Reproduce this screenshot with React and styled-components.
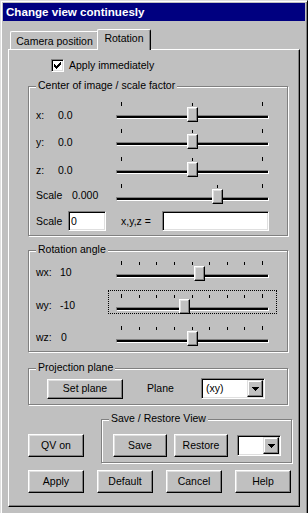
import React from "react";
import styled, { createGlobalStyle } from "styled-components";

const GlobalStyle = createGlobalStyle`
  html, body { margin: 0; padding: 0; background: #c0c0c0; overflow: hidden; }
  body {
    font-family: "Liberation Sans", Arial, sans-serif;
    font-size: 10.5px;
    color: #000;
  }
  * { box-sizing: border-box; }
`;

const Window = styled.div`
  width: 308px;
  height: 530px;
  background: #c0c0c0;
  border: 1px solid;
  border-color: #dfdfdf #000 #000 #dfdfdf;
  box-shadow: inset 1px 1px 0 #fff, inset -1px -1px 0 #808080;
  padding: 2px;
  display: flex;
  flex-direction: column;
`;

const TitleBar = styled.div`
  height: 18px;
  flex: none;
  background: #000080;
  color: #fff;
  font-weight: bold;
  font-size: 11.6px;
  line-height: 18px;
  padding-left: 3px;
  white-space: nowrap;
`;

const TabControl = styled.div`
  margin: 8px 5px 0;
  display: flex;
  flex-direction: column;
`;

const TabStrip = styled.div`
  height: 20px;
  display: flex;
  align-items: flex-end;
  padding-left: 2px;
`;

const Tab = styled.div`
  position: relative;
  z-index: ${(p) => (p.$active ? 1 : 0)};
  width: ${(p) => p.$w}px;
  height: ${(p) => (p.$active ? 21 : 18)}px;
  margin: ${(p) => (p.$active ? "0 -2px -1px -2px" : "0")};
  padding-top: ${(p) => (p.$active ? 2 : 3)}px;
  background: #c0c0c0;
  border-top: 1px solid #fff;
  border-left: 1px solid #fff;
  border-right: 1px solid #000;
  border-radius: 2px 2px 0 0;
  box-shadow: inset -1px 0 0 #808080;
  text-align: center;
  line-height: 13px;
  white-space: nowrap;
`;

const Panel = styled.div`
  height: 458px;
  border: 1px solid;
  border-color: #fff #000 #000 #fff;
  box-shadow: inset -1px -1px 0 #808080;
  padding-left: 19px;
  display: flex;
  flex-direction: column;
`;

const CheckRow = styled.div`
  display: flex;
  align-items: center;
  gap: 5px;
  height: 13px;
  margin: 9px 0 0 23px;
  line-height: 13px;
`;

const CheckBox = styled.span`
  width: 13px;
  height: 13px;
  background: #fff;
  border: 1px solid;
  border-color: #808080 #fff #fff #808080;
  box-shadow: inset 1px 1px 0 #000, inset -1px -1px 0 #dfdfdf;
  display: flex;
  align-items: center;
  justify-content: center;
  svg { display: block; }
`;

const Group = styled.div`
  position: relative;
  flex: none;
  width: ${(p) => p.$w}px;
  height: ${(p) => p.$h}px;
  margin-top: ${(p) => p.$mt}px;
  margin-left: ${(p) => p.$ml || 0}px;
  padding: ${(p) => p.$pad};
  border: 1px solid #808080;
  box-shadow: 1px 1px 0 #fff, inset 1px 1px 0 #fff;
  display: flex;
  flex-direction: ${(p) => p.$dir || "column"};
  align-items: flex-start;
  gap: ${(p) => p.$gap || 0}px;
`;

const Legend = styled.span`
  position: absolute;
  top: -8px;
  left: 7px;
  padding: 0 2px;
  background: #c0c0c0;
  line-height: 13px;
  white-space: nowrap;
`;

const Rows = styled.div`
  display: flex;
  flex-direction: column;
  gap: ${(p) => p.$gap}px;
`;

const SliderRowWrap = styled.div`
  display: flex;
  align-items: flex-end;
  height: 24px;
`;

const LabelArea = styled.div`
  width: 72px;
  display: flex;
  line-height: 13px;
  padding-bottom: ${(p) => p.$lift}px;
  white-space: nowrap;
`;

const Name = styled.span`
  width: ${(p) => p.$w}px;
  flex: none;
`;

const SliderBox = styled.div`
  position: relative;
  width: 169px;
  height: 24px;
  padding-top: 17px;
  outline: ${(p) => (p.$focused ? "1px dotted #000" : "none")};
  outline-offset: -1px;
`;

const TickMarks = styled.svg`
  position: absolute;
  left: 0;
  top: 0;
`;

const Channel = styled.div`
  margin: 0 8px;
  height: 4px;
  background: #000;
  border-style: solid;
  border-width: 1px 1px 1px 1px;
  border-color: #808080 #fff #fff #808080;
  border-top-width: 1px;
  border-bottom-width: 1px;
  box-shadow: none;
`;

const Thumb = styled.div`
  position: absolute;
  top: 9px;
  width: 11px;
  height: 15px;
  background: #c0c0c0;
  border: 1px solid;
  border-color: #fff #000 #000 #fff;
  box-shadow: inset -1px -1px 0 #808080, inset 1px 1px 0 #dfdfdf;
`;

const InputRow = styled.div`
  display: flex;
  align-items: center;
  height: 20px;
  margin-top: 7px;
  line-height: 13px;
  white-space: nowrap;
`;

const Caption = styled.span`
  width: ${(p) => p.$w}px;
  margin-left: ${(p) => p.$ml || 0}px;
  flex: none;
  line-height: 13px;
  white-space: nowrap;
`;

const TextBox = styled.div`
  width: ${(p) => p.$w}px;
  height: 20px;
  flex: none;
  background: #fff;
  border: 1px solid;
  border-color: #808080 #fff #fff #808080;
  box-shadow: inset 1px 1px 0 #000, inset -1px -1px 0 #dfdfdf;
  padding: 1px 2px 0;
  line-height: 16px;
`;

const Button = styled.button`
  width: ${(p) => p.$w}px;
  height: ${(p) => p.$h || 23}px;
  margin-top: ${(p) => p.$mt || 0}px;
  flex: none;
  padding: 0;
  background: #c0c0c0;
  border: 1px solid;
  border-color: #fff #000 #000 #fff;
  box-shadow: inset -1px -1px 0 #808080, inset 1px 1px 0 #dfdfdf;
  font: inherit;
  color: #000;
  line-height: 13px;
`;

const Combo = styled.div`
  width: ${(p) => p.$w}px;
  height: 21px;
  margin-top: ${(p) => p.$mt || 0}px;
  flex: none;
  display: flex;
  background: #fff;
  border: 1px solid;
  border-color: #808080 #fff #fff #808080;
  box-shadow: inset 1px 1px 0 #000, inset -1px -1px 0 #dfdfdf;
  padding: 1px;
`;

const ComboText = styled.span`
  flex: 1;
  padding-left: 3px;
  line-height: 17px;
`;

const ComboButton = styled.span`
  width: 16px;
  height: 17px;
  flex: none;
  background: #c0c0c0;
  border: 1px solid;
  border-color: #dfdfdf #000 #000 #dfdfdf;
  box-shadow: inset -1px -1px 0 #808080, inset 1px 1px 0 #fff;
  display: flex;
  align-items: center;
  justify-content: center;
  svg { display: block; }
`;

const PlaneRow = styled.div`
  display: flex;
  align-items: center;
  line-height: 13px;
`;

const SaveRow = styled.div`
  display: flex;
  align-items: flex-start;
  margin-top: 14px;
`;

const ButtonRow = styled.div`
  display: flex;
  gap: 13px;
  margin-top: 7px;
`;

const Arrow = () => (
  <svg width="7" height="4" viewBox="0 0 7 4" shapeRendering="crispEdges">
    <path d="M0 0h7v1h-7z M1 1h5v1h-5z M2 2h3v1h-3z M3 3h1v1h-1z" fill="#000" />
  </svg>
);

const CheckMark = () => (
  <svg width="7" height="7" viewBox="0 0 7 7" shapeRendering="crispEdges">
    <path
      d="M6 0h1v1h-1z M5 1h2v1h-2z M0 2h1v1h-1z M4 2h3v1h-3z M0 3h2v1h-2z M3 3h3v1h-3z M0 4h5v1h-5z M1 5h3v1h-3z M2 6h1v1h-1z"
      fill="#000"
    />
  </svg>
);

function Slider({ pos, ticks, focused }) {
  const toX = (f) => 13 + Math.round(f * 141);
  const c = toX(pos);
  return (
    <SliderBox $focused={focused}>
      <TickMarks width="169" height="9" shapeRendering="crispEdges">
        {ticks.map((t, i) => {
          const end = i === 0 || i === ticks.length - 1;
          return (
            <rect key={i} x={toX(t)} y={end ? 4 : 5} width="1" height={end ? 4 : 3} fill="#000" />
          );
        })}
      </TickMarks>
      <Channel />
      <Thumb style={{ left: c - 5 }} />
    </SliderBox>
  );
}

function SliderRow({ name, nameW, value, lift, pos, ticks, focused }) {
  return (
    <SliderRowWrap>
      <LabelArea $lift={lift}>
        <Name $w={nameW}>{name}</Name>
        <span>{value}</span>
      </LabelArea>
      <Slider pos={pos} ticks={ticks} focused={focused} />
    </SliderRowWrap>
  );
}

const three = [0, 0.5, 1];
const nine = [0, 0.125, 0.25, 0.375, 0.5, 0.625, 0.75, 0.875, 1];
const scalePos = 96 / 141;
const rot = (v) => (v + 90) / 180;

export default function App() {
  return (
    <>
      <GlobalStyle />
      <Window>
        <TitleBar>Change view continuesly</TitleBar>
        <TabControl>
          <TabStrip>
            <Tab $w={89}>Camera position</Tab>
            <Tab $w={54} $active>Rotation</Tab>
          </TabStrip>
          <Panel>
            <CheckRow>
              <CheckBox>
                <CheckMark />
              </CheckBox>
              <span>Apply immediately</span>
            </CheckRow>

            <Group $w={260} $h={150} $mt={14} $pad="11px 0 0 7px">
              <Legend>Center of image / scale factor</Legend>
              <Rows $gap={3.4}>
                <SliderRow name="x:" nameW={22} value="0.0" lift={0} pos={0.5} ticks={three} />
                <SliderRow name="y:" nameW={22} value="0.0" lift={0} pos={0.5} ticks={three} />
                <SliderRow name="z:" nameW={22} value="0.0" lift={0} pos={0.5} ticks={three} />
                <SliderRow
                  name="Scale"
                  nameW={36}
                  value="0.000"
                  lift={2}
                  pos={scalePos}
                  ticks={[0, scalePos, 1]}
                />
              </Rows>
              <InputRow>
                <Caption $w={32}>Scale</Caption>
                <TextBox $w={38}>0</TextBox>
                <Caption $w={41} $ml={15}>x,y,z =</Caption>
                <TextBox $w={107} />
              </InputRow>
            </Group>

            <Group $w={260} $h={102} $mt={14} $pad="6px 0 0 7px">
              <Legend>Rotation angle</Legend>
              <Rows $gap={8.5}>
                <SliderRow name="wx:" nameW={24} value="10" lift={2} pos={rot(10)} ticks={nine} />
                <SliderRow name="wy:" nameW={24} value="-10" lift={2} pos={rot(-10)} ticks={nine} focused />
                <SliderRow name="wz:" nameW={25} value="0" lift={2} pos={rot(0)} ticks={nine} />
              </Rows>
            </Group>

            <Group $w={260} $h={37} $mt={16} $pad="9px 0 0 18px">
              <Legend>Projection plane</Legend>
              <PlaneRow>
                <Button $w={76} $h={20}>Set plane</Button>
                <Caption $w={54} $ml={24}>Plane</Caption>
                <Combo $w={64}>
                  <ComboText>(xy)</ComboText>
                  <ComboButton>
                    <Arrow />
                  </ComboButton>
                </Combo>
              </PlaneRow>
            </Group>

            <SaveRow>
              <Button $w={56} $mt={15}>QV on</Button>
              <Group $w={191} $h={44} $mt={0} $ml={17} $pad="14px 0 0 11px" $dir="row" $gap={0}>
                <Legend>Save / Restore View</Legend>
                <Button $w={54}>Save</Button>
                <Button $w={54} style={{ marginLeft: 7 }}>Restore</Button>
                <Combo $w={44} $mt={1} style={{ marginLeft: 9 }}>
                  <ComboText />
                  <ComboButton>
                    <Arrow />
                  </ComboButton>
                </Combo>
              </Group>
            </SaveRow>

            <ButtonRow>
              <Button $w={56}>Apply</Button>
              <Button $w={56}>Default</Button>
              <Button $w={56}>Cancel</Button>
              <Button $w={56}>Help</Button>
            </ButtonRow>
          </Panel>
        </TabControl>
      </Window>
    </>
  );
}
